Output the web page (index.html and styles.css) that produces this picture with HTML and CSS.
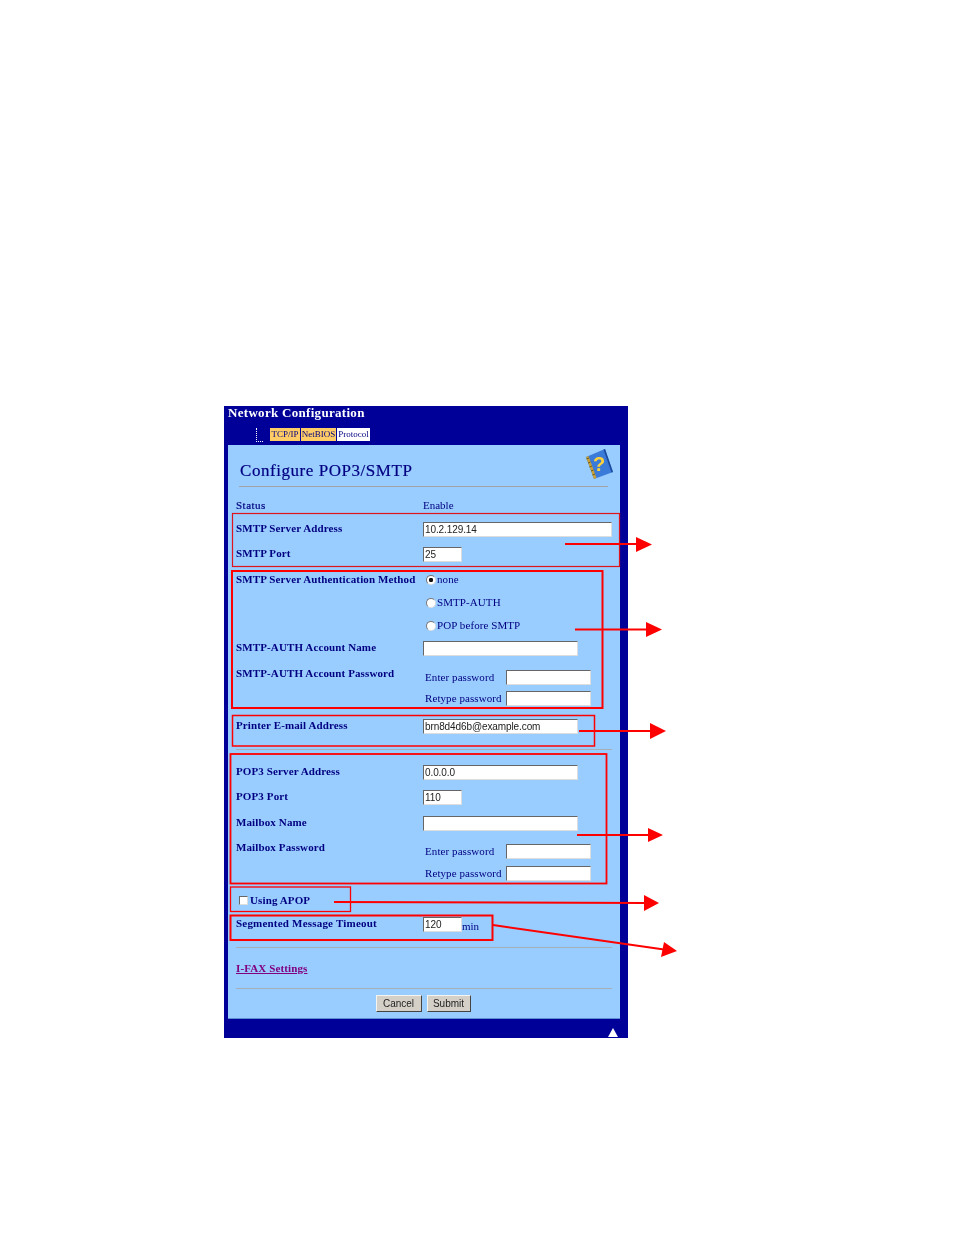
FILE: index.html
```html
<!DOCTYPE html>
<html lang="en">
<head>
<meta charset="utf-8">
<title>Configure POP3/SMTP</title>
<link rel="stylesheet" href="styles.css">
</head>
<body>
<div class="window">
  <header class="top">
    <div class="brand">Network Configuration</div>
    <nav class="tabs">
      <span class="tree"></span>
      <a class="tab tab-a">TCP/IP</a>
      <a class="tab tab-b">NetBIOS</a>
      <a class="tab tab-c">Protocol</a>
    </nav>
  </header>
  <main class="panel">
    <div class="title-row">
      <h1>Configure POP3/SMTP</h1>
      <svg class="help" viewBox="0 0 30 32" width="30" height="32">
        <polygon points="2,9 21,1 29,24 10,31" fill="#3a7ad8"/>
        <polygon points="21,1 29,24 27.500,24.600 19.500,1.600" fill="#1c4a9c"/>
        <polygon points="2,9 4.500,8 12.500,30 10,31" fill="#c9a23a"/>
        <path d="M2.500 11l2.500-1M4 15l2.500-1M5.500 19l2.500-1M7 23l2.500-1M8.500 27l2.500-1" stroke="#6b5a20" stroke-width="1"/>
        <text x="9" y="23" class="help-q">?</text>
      </svg>
    </div>
    <hr class="rule rule-title">

    <div class="row h23 status"><span class="label">Status</span><span class="plain enable">Enable</span></div>
    <div class="row h25"><span class="label">SMTP Server Address</span><input class="field w189" value="10.2.129.14"></div>
    <div class="row h26"><span class="label">SMTP Port</span><input class="field w39" value="25"></div>
    <div class="row h23"><span class="label">SMTP Server Authentication Method</span><label class="choice"><input type="radio" name="auth" checked><span>none</span></label></div>
    <div class="row h23"><span></span><label class="choice"><input type="radio" name="auth"><span>SMTP-AUTH</span></label></div>
    <div class="row h22"><span></span><label class="choice"><input type="radio" name="auth"><span>POP before SMTP</span></label></div>
    <div class="row h26"><span class="label">SMTP-AUTH Account Name</span><input class="field w155"></div>
    <div class="row h46">
      <span class="label">SMTP-AUTH Account Password</span>
      <div class="passwords gap6">
        <div class="pw"><span class="plain">Enter password</span><input class="field w85" type="password"></div>
        <div class="pw"><span class="plain">Retype password</span><input class="field w85" type="password"></div>
      </div>
    </div>
    <div class="row h30 printer"><span class="label">Printer E-mail Address</span><input class="field w155" value="brn8d4d6b@example.com"></div>
    <hr class="rule rule-wide rule-pop">
    <div class="row h25"><span class="label">POP3 Server Address</span><input class="field w155" value="0.0.0.0"></div>
    <div class="row h26"><span class="label">POP3 Port</span><input class="field w39" value="110"></div>
    <div class="row h25"><span class="label">Mailbox Name</span><input class="field w155"></div>
    <div class="row h47">
      <span class="label">Mailbox Password</span>
      <div class="passwords gap7">
        <div class="pw"><span class="plain">Enter password</span><input class="field w85" type="password"></div>
        <div class="pw"><span class="plain">Retype password</span><input class="field w85" type="password"></div>
      </div>
    </div>
    <label class="apop"><input type="checkbox"><span class="label">Using APOP</span></label>
    <div class="row h30"><span class="label seg">Segmented Message Timeout</span><div class="timeout"><input class="field w39" value="120"><span class="plain min">min</span></div></div>
    <hr class="rule rule-wide">
    <a class="link">I-FAX Settings</a>
    <hr class="rule rule-wide">
    <div class="actions"><button class="btn btn-cancel">Cancel</button><button class="btn btn-submit">Submit</button></div>
  </main>
  <div class="foot"><span class="up"></span></div>
</div>

<svg class="notes" viewBox="0 0 954 1235" width="954" height="1235">
  <g fill="none" stroke="#f00">
    <rect x="232.5" y="513.5" width="387" height="53" stroke="#e0141c" stroke-width="1.2"/>
    <rect x="232" y="571" width="370.500" height="137" stroke-width="2"/>
    <rect x="232.500" y="715.500" width="362" height="30.500" stroke-width="1.500"/>
    <rect x="230.500" y="754" width="376" height="129.500" stroke-width="1.800"/>
    <rect x="230.500" y="887" width="120" height="24.500" stroke-width="1.300"/>
    <rect x="230.500" y="915.500" width="262" height="24.500" stroke-width="2"/>
    <path d="M565 544H638" stroke-width="2"/>
    <path d="M575 629.500H649" stroke-width="2"/>
    <path d="M579 731H652" stroke-width="2"/>
    <path d="M577 835H650" stroke-width="2"/>
    <path d="M334 902L646 903" stroke-width="2"/>
    <path d="M493 925L664 949.500" stroke-width="2"/>
  </g>
  <g fill="#f00">
    <polygon points="636,537 652,544.500 636,552"/>
    <polygon points="646,622 662,629.500 646,637"/>
    <polygon points="650,723 666,731 650,739"/>
    <polygon points="648,828 663,835 648,842"/>
    <polygon points="644,895 659,903 644,911"/>
    <polygon points="664,942 677,951 661,957"/>
  </g>
</svg>
</body>
</html>
```
FILE: styles.css
```css
* { box-sizing: border-box; }
html, body { margin: 0; background: #fff; }
body { width: 954px; height: 1235px; padding: 406px 0 0 224px; position: relative; overflow: hidden; font-family: "Liberation Serif", serif; }

.window { width: 404px; height: 632px; background: #000099; display: flex; flex-direction: column; filter: blur(0.3px); }
.top { height: 39px; flex: none; }
.brand { padding: 0 0 0 4px; height: 15px; font-size: 13px; line-height: 14px; font-weight: 700; color: #fff; letter-spacing: 0.3px; white-space: nowrap; }
.tabs { display: flex; gap: 1px; height: 24px; padding: 7px 0 0 32px; align-items: flex-start; }
.tree { width: 7px; height: 14px; margin-right: 6px; border-left: 1px dotted #fff; border-bottom: 1px dotted #fff; }
.tab { height: 13px; font-size: 9px; line-height: 13px; text-align: center; color: #000080; white-space: nowrap; }
.tab-a { width: 30px; background: #ffcc66; }
.tab-b { width: 35px; background: #ffcc66; }
.tab-c { width: 33px; background: #fff; }

.panel { margin-left: 4px; width: 392px; height: 574px; flex: none; background: #99ccff; border-bottom: 1px solid #5c8fd6; padding: 0 8px; display: flex; flex-direction: column; }
.title-row { height: 41px; position: relative; padding: 16px 0 0 4px; flex: none; }
h1 { margin: 0; font-size: 17px; line-height: 19px; font-weight: 400; color: #000080; letter-spacing: 0.55px; white-space: nowrap; -webkit-text-stroke: 0.2px #000080; }
.help { position: absolute; right: -2px; top: 3px; }
.help-q { font-family: "Liberation Sans", sans-serif; font-size: 20px; font-weight: 700; fill: #ffd23c; }

.rule { height: 1px; margin: 0; border: 0; background: #a3a3a3; flex: none; }
.rule-title { margin: 0 4px 12px 3px; }
.rule-wide { background: #a6aeb8; }
.rule-pop { margin-bottom: 15px; }

.row { display: grid; grid-template-columns: 187px 1fr; align-items: start; flex: none; }
.h22 { height: 22px; } .h23 { height: 23px; } .h25 { height: 25px; } .h26 { height: 26px; }
.h30 { height: 30px; } .h46 { height: 46px; } .h47 { height: 47px; }
.printer { margin-top: 6px; }

.label { font-size: 11px; line-height: 13px; font-weight: 700; color: #000080; letter-spacing: 0.12px; white-space: nowrap; }
.seg { letter-spacing: 0.2px; }
.plain { font-size: 11px; line-height: 13px; color: #000080; letter-spacing: 0.08px; white-space: nowrap; }
.status .label { font-weight: 400; letter-spacing: 0.5px; -webkit-text-stroke: 0.2px #000080; }
.enable { letter-spacing: 0; }

.field { display: block; height: 15px; margin: 0; padding: 0 0 0 1px; background: #fff; border: 1px solid; border-color: #666 #ddd #ddd #666; border-radius: 0; font-family: "Liberation Sans", sans-serif; font-size: 10px; line-height: 13px; letter-spacing: -0.1px; color: #222; outline: 0; }
.w189 { width: 189px; } .w155 { width: 155px; } .w85 { width: 85px; } .w39 { width: 39px; }

.choice { display: flex; align-items: center; gap: 1px; height: 13px; padding-left: 3px; }
.choice span { font-size: 11px; line-height: 13px; color: #000080; letter-spacing: 0.08px; white-space: nowrap; }
.choice input { appearance: none; width: 10px; height: 10px; margin: 0; border-radius: 50%; background: #fff; border: 1px solid; border-color: #777 #ddd #ddd #777; flex: none; }
.choice input:checked { background: radial-gradient(circle, #111 0 2px, #fff 2.3px); }

.passwords { padding: 3px 0 0 2px; display: flex; flex-direction: column; }
.gap6 { gap: 6px; }
.gap7 { gap: 7px; }
.pw { display: grid; grid-template-columns: 81px 85px; align-items: center; height: 15px; }

.apop { display: flex; align-items: center; gap: 2px; height: 29px; padding: 0 0 4px 3px; flex: none; }
.apop input { appearance: none; width: 9px; height: 9px; margin: 0; background: #fff; border: 1px solid; border-color: #666 #ddd #ddd #666; }

.timeout { display: flex; align-items: flex-end; }
.min { line-height: 13px; margin-bottom: -1px; letter-spacing: 0; }

.link { height: 40px; padding-top: 14px; font-size: 11px; line-height: 13px; font-weight: 700; color: #800080; letter-spacing: 0.12px; flex: none; }
.link { text-decoration: underline; text-underline-offset: 1px; text-decoration-thickness: 1px; }

.actions { display: flex; justify-content: center; gap: 5px; padding: 6px 2px 0 0; flex: none; }
.btn { height: 17px; margin: 0; padding: 0; background: #d4d0c8; border: 1px solid; border-color: #f4f4f0 #444 #444 #f4f4f0; border-radius: 0; font-family: "Liberation Sans", sans-serif; font-size: 10px; line-height: 13px; color: #222; }
.btn-cancel { width: 46px; }
.btn-submit { width: 44px; }

.foot { flex: 1; position: relative; }
.up { position: absolute; right: 10px; bottom: 1px; width: 0; height: 0; border-left: 5px solid transparent; border-right: 5px solid transparent; border-bottom: 9px solid #fff; }

.notes { position: absolute; left: 0; top: 0; pointer-events: none; }
```
